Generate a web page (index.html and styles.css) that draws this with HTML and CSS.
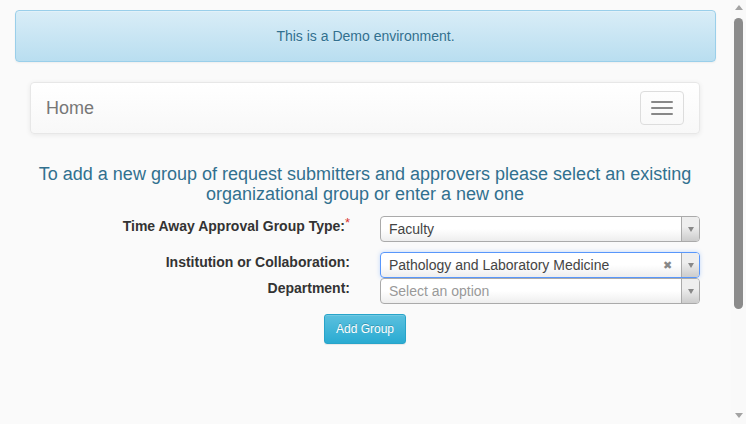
FILE: index.html
```html
<!DOCTYPE html>
<html lang="en">
<head>
<meta charset="utf-8">
<title>Demo</title>
<link rel="stylesheet" href="styles.css">
</head>
<body>
<div class="page">
  <div class="alert">This is a Demo environment.</div>
  <div class="container">
    <nav class="navbar">
      <span class="brand">Home</span>
      <button class="toggle" type="button" aria-label="Toggle navigation">
        <span class="bar"></span><span class="bar"></span><span class="bar"></span>
      </button>
    </nav>
    <h4 class="intro">To add a new group of request submitters and approvers please select an existing organizational group or enter a new one</h4>
    <form class="form">
      <div class="row gap-after">
        <label class="label">Time Away Approval Group Type:<span class="req">*</span></label>
        <div class="field">
          <div class="choice"><span class="value">Faculty</span><span class="arrow"><span class="tri"></span></span></div>
        </div>
      </div>
      <div class="row">
        <label class="label">Institution or Collaboration:</label>
        <div class="field">
          <div class="choice focused"><span class="value">Pathology and Laboratory Medicine</span><span class="clear">&#x2716;</span><span class="arrow"><span class="tri"></span></span></div>
        </div>
      </div>
      <div class="row gap-after">
        <label class="label">Department:</label>
        <div class="field">
          <div class="choice"><span class="value placeholder">Select an option</span><span class="arrow"><span class="tri"></span></span></div>
        </div>
      </div>
      <div class="actions">
        <button class="btn" type="button">Add Group</button>
      </div>
    </form>
  </div>
</div>
<div class="scrollbar" aria-hidden="true">
  <span class="sb-up"></span>
  <span class="sb-thumb"></span>
  <span class="sb-rest"></span>
  <span class="sb-down"></span>
</div>
</body>
</html>
```
FILE: styles.css
```css
html, body {
  margin: 0;
  padding: 0;
  background: #fafafa;
}
body {
  font-family: "Liberation Sans", Arial, sans-serif;
  font-size: 14px;
  line-height: 20px;
  color: #333;
}
.page {
  padding: 10px 30px 0 15px;
  min-height: 560px;
}
.alert {
  padding: 15px;
  border: 1px solid #9acfea;
  border-radius: 4px;
  background: linear-gradient(to bottom, #d9edf7 0%, #b9def0 100%);
  box-shadow: inset 0 1px 0 rgba(255,255,255,.25), 0 1px 2px rgba(0,0,0,.05);
  color: #31708f;
  text-shadow: 0 1px 0 rgba(255,255,255,.2);
  text-align: center;
  margin-bottom: 20px;
}
.container {
  padding: 0 16px 0 15px;
}
.navbar {
  display: flex;
  justify-content: space-between;
  align-items: flex-start;
  min-height: 50px;
  border: 1px solid #e7e7e7;
  border-radius: 4px;
  background: linear-gradient(to bottom, #ffffff 0%, #f8f8f8 100%);
  box-shadow: inset 0 1px 0 rgba(255,255,255,.15), 0 1px 5px rgba(0,0,0,.075);
  margin-bottom: 20px;
}
.brand {
  font-size: 18px;
  line-height: 20px;
  padding: 15px;
  color: #777;
}
.toggle {
  margin: 8px 15px 0 0;
  width: 44px;
  height: 34px;
  padding: 9px 10px;
  border: 1px solid #ddd;
  border-radius: 4px;
  background: transparent;
  display: flex;
  flex-direction: column;
  gap: 4px;
  box-sizing: border-box;
}
.bar {
  display: block;
  width: 22px;
  height: 2px;
  border-radius: 1px;
  background: #888;
}
.intro {
  margin: 30px 0 12px;
  font-size: 18px;
  line-height: 20px;
  font-weight: normal;
  color: #31708f;
  text-align: center;
}
.form {
  margin: 0 -15px;
}
.row {
  display: grid;
  grid-template-columns: 1fr 1fr;
}
.gap-after {
  margin-bottom: 10px;
}
.label {
  padding: 0 15px;
  text-align: right;
  font-weight: bold;
  line-height: 20px;
}
.req {
  color: #d9322c;
  font-size: 13px;
  font-weight: normal;
  vertical-align: top;
  line-height: 13px;
}
.field {
  padding: 0 15px;
}
.choice {
  display: flex;
  align-items: stretch;
  height: 26px;
  box-sizing: border-box;
  border: 1px solid #aaa;
  border-radius: 4px;
  background: linear-gradient(to top, #eee 0%, #fff 50%);
  line-height: 24px;
  color: #444;
  overflow: hidden;
}
.choice.focused {
  border-color: #5897fb;
  box-shadow: 0 0 4px rgba(88,151,251,.35);
}
.value {
  flex: 1;
  padding-left: 8px;
  white-space: nowrap;
}
.placeholder {
  color: #999;
}
.clear {
  width: 14px;
  margin-right: 7px;
  color: #888;
  font-size: 11px;
  text-align: center;
}
.arrow {
  width: 17px;
  border-left: 1px solid #aaa;
  background: linear-gradient(to top, #ccc 0%, #eee 60%);
  display: flex;
  align-items: center;
  justify-content: center;
}
.tri {
  width: 0;
  height: 0;
  border-left: 3px solid transparent;
  border-right: 3px solid transparent;
  border-top: 5px solid #888;
}
.actions {
  display: flex;
  justify-content: center;
}
.btn {
  font-family: "Liberation Sans", Arial, sans-serif;
  font-size: 12px;
  line-height: 18px;
  padding: 5px 11px;
  border: 1px solid #28a4c9;
  border-radius: 3px;
  color: #fff;
  background: linear-gradient(to bottom, #5bc0de 0%, #2aabd2 100%);
  text-shadow: 0 -1px 0 rgba(0,0,0,.2);
  box-shadow: inset 0 1px 0 rgba(255,255,255,.15), 0 1px 1px rgba(0,0,0,.075);
}
.scrollbar {
  position: fixed;
  top: 0;
  right: 0;
  width: 15px;
  height: 100vh;
  background: #f9f9f9;
  display: flex;
  flex-direction: column;
  align-items: center;
  padding: 5px 0 6px;
  box-sizing: border-box;
}
.sb-up, .sb-down {
  width: 0;
  height: 0;
  border-left: 4px solid transparent;
  border-right: 4px solid transparent;
}
.sb-up {
  border-bottom: 5px solid #a3a3a3;
}
.sb-down {
  border-top: 5px solid #a3a3a3;
}
.sb-thumb {
  margin-top: 8px;
  width: 9px;
  height: 291px;
  border-radius: 5px;
  background: #8b8b8b;
}
.sb-rest {
  flex: 1;
}
```
